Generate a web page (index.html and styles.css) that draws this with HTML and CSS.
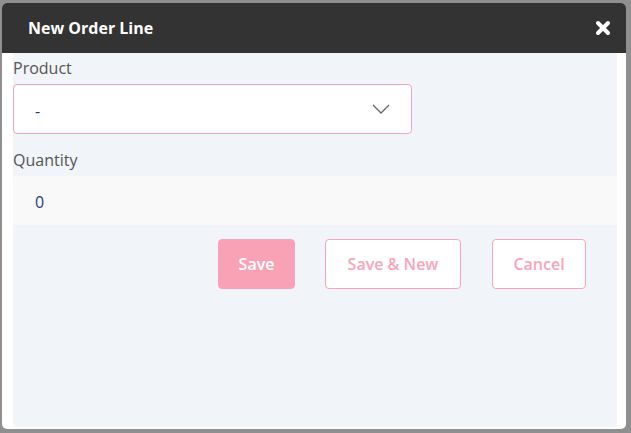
FILE: index.html
```html
<!DOCTYPE html>
<html>
<head>
<meta charset="utf-8">
<link rel="stylesheet" href="styles.css">
</head>
<body>
<div class="dialog">
  <div class="dialog-header">
    <span class="dialog-title">New Order Line</span>
    <button class="close-btn" aria-label="Close">
      <svg width="16" height="16" viewBox="0 0 16 16"><path d="M3 3 L13 13 M13 3 L3 13" stroke="#fff" stroke-width="4" stroke-linecap="round"/></svg>
    </button>
  </div>
  <div class="dialog-body">
    <div class="panel">
      <label class="field-label">Product</label>
      <div class="select">
        <span class="select-value">-</span>
        <svg class="chevron" width="18" height="10" viewBox="0 0 18 10"><path d="M1 1 L9 9 L17 1" fill="none" stroke="#666" stroke-width="1.3"/></svg>
      </div>
      <label class="field-label qty-label">Quantity</label>
      <div class="input">0</div>
      <div class="actions">
        <button class="btn btn-primary">Save</button>
        <button class="btn btn-outline btn-save-new">Save &amp; New</button>
        <button class="btn btn-outline btn-cancel">Cancel</button>
      </div>
    </div>
  </div>
</div>
</body>
</html>
```
FILE: styles.css
```css
html, body {
  margin: 0;
  padding: 0;
  background: #8f8f8f;
  height: 100%;
}
body {
  font-family: "Open Sans", "Noto Sans", sans-serif;
  padding: 3px 5px 4px 2px;
  box-sizing: border-box;
}
.dialog {
  width: 624px;
  height: 426px;
  background: #fff;
  border-radius: 5px;
  display: flex;
  flex-direction: column;
  overflow: hidden;
}
.dialog-header {
  height: 50px;
  flex: none;
  background: #333333;
  display: flex;
  align-items: center;
  justify-content: space-between;
  padding: 0 15px 0 26px;
}
.dialog-title {
  color: #fff;
  font-weight: 700;
  font-size: 16px;
}
.close-btn {
  background: none;
  border: 0;
  padding: 0;
  display: flex;
  cursor: pointer;
}
.dialog-body {
  flex: 1;
  padding: 0 9px 2px 11px;
  display: flex;
}
.panel {
  flex: 1;
  background: #f1f4f8;
  border-radius: 0 0 4px 4px;
  display: flex;
  flex-direction: column;
  align-items: flex-start;
}
.field-label {
  color: #555;
  font-size: 16px;
  line-height: 22px;
  margin-top: 4px;
  height: 27px;
}
.qty-label {
  margin-top: 15px;
}
.select {
  width: 399px;
  height: 50px;
  box-sizing: border-box;
  background: #fff;
  border: 1px solid #f4a3b8;
  border-radius: 4px;
  display: flex;
  align-items: center;
  justify-content: space-between;
  padding: 0 21px 0 21px;
}
.select-value {
  color: #1c3f7a;
  font-size: 16px;
  padding-top: 3px;
}
.input {
  align-self: stretch;
  height: 49px;
  background: #f9f9f9;
  border-radius: 3px;
  display: flex;
  align-items: center;
  padding: 2px 0 0 22px;
  box-sizing: border-box;
  color: #1c3f7a;
  font-size: 16px;
}
.actions {
  align-self: stretch;
  display: flex;
  justify-content: flex-end;
  gap: 30px;
  margin-top: 14px;
  padding-right: 31px;
}
.btn {
  height: 50px;
  box-sizing: border-box;
  font-family: inherit;
  font-size: 16px;
  font-weight: 600;
  border-radius: 4px;
  border: 1px solid #f7a4b8;
  cursor: pointer;
}
.btn-primary {
  background: #f9a2b6;
  color: #fff;
  width: 77px;
}
.btn-outline {
  background: #fff;
  color: #f7a4b8;
}
.btn-save-new { width: 136px; }
.btn-cancel { width: 94px; margin-left: 1px; }
```
